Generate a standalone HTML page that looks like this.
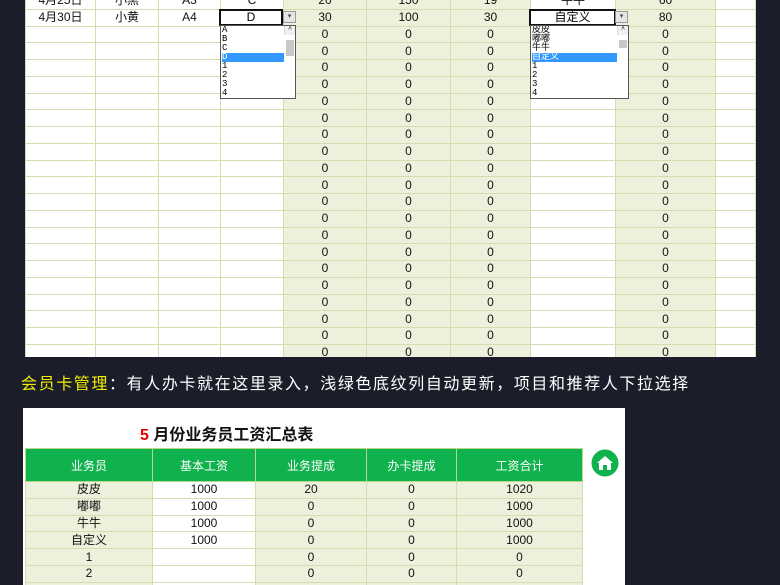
<!DOCTYPE html>
<html><head><meta charset="utf-8"><style>
*{margin:0;padding:0;box-sizing:border-box}
html{width:780px;height:585px;overflow:hidden}
body{width:780px;height:585px;overflow:hidden;background:#1b1d2a;font-family:"Liberation Sans","Noto Sans CJK SC",sans-serif;position:relative}
table{border-collapse:collapse;table-layout:fixed;position:absolute}
td{border:1px solid #d3ddb0;text-align:center;font-size:12px;color:#111;padding:0;overflow:hidden;white-space:nowrap}
.g{background:#edf1dc}
.w{background:#fff}
#top td{height:16.75px;line-height:15px}
.box{position:absolute;background:#fff;border:1px solid #555;font-size:9px;line-height:9px;padding-left:1px;color:#000;overflow:hidden}
.box div{height:9px;font-family:"Liberation Mono","Noto Sans CJK SC",monospace}
.sel{background:#3399ff;color:#fff}
.sb{position:absolute;top:0;right:0;width:11px;height:100%;background:#f0f0f0;border-left:1px solid #ddd}
.arr{position:absolute;width:13px;height:12px;background:#e6e6e6;border:1px solid #999;font-size:7px;line-height:10px;text-align:center;color:#444}
.act{position:absolute;border:2px solid #111;background:#fff;font-size:12px;text-align:center;line-height:13px}
#bot td{height:16.8px;line-height:15px}
#bot th{background:#10b24e;color:#fff;font-weight:normal;font-size:12px;height:33px;border:1px solid #b8d88a}
</style></head><body>
<table id="top" style="left:25px;top:-8px;width:730px">
<colgroup><col style="width:70px"><col style="width:63px"><col style="width:62px"><col style="width:63px"><col style="width:83px"><col style="width:84px"><col style="width:80px"><col style="width:85px"><col style="width:100px"><col style="width:40px"></colgroup>
<tr><td class="w">4月25日</td><td class="w">小黑</td><td class="w">A3</td><td class="w">C</td><td class="g">20</td><td class="g">150</td><td class="g">19</td><td class="w">牛牛</td><td class="g">60</td><td class="w"></td></tr>
<tr><td class="w">4月30日</td><td class="w">小黄</td><td class="w">A4</td><td class="w">D</td><td class="g">30</td><td class="g">100</td><td class="g">30</td><td class="w">自定义</td><td class="g">80</td><td class="w"></td></tr>
<tr><td class="w"></td><td class="w"></td><td class="w"></td><td class="w"></td><td class="g">0</td><td class="g">0</td><td class="g">0</td><td class="w"></td><td class="g">0</td><td class="w"></td></tr>
<tr><td class="w"></td><td class="w"></td><td class="w"></td><td class="w"></td><td class="g">0</td><td class="g">0</td><td class="g">0</td><td class="w"></td><td class="g">0</td><td class="w"></td></tr>
<tr><td class="w"></td><td class="w"></td><td class="w"></td><td class="w"></td><td class="g">0</td><td class="g">0</td><td class="g">0</td><td class="w"></td><td class="g">0</td><td class="w"></td></tr>
<tr><td class="w"></td><td class="w"></td><td class="w"></td><td class="w"></td><td class="g">0</td><td class="g">0</td><td class="g">0</td><td class="w"></td><td class="g">0</td><td class="w"></td></tr>
<tr><td class="w"></td><td class="w"></td><td class="w"></td><td class="w"></td><td class="g">0</td><td class="g">0</td><td class="g">0</td><td class="w"></td><td class="g">0</td><td class="w"></td></tr>
<tr><td class="w"></td><td class="w"></td><td class="w"></td><td class="w"></td><td class="g">0</td><td class="g">0</td><td class="g">0</td><td class="w"></td><td class="g">0</td><td class="w"></td></tr>
<tr><td class="w"></td><td class="w"></td><td class="w"></td><td class="w"></td><td class="g">0</td><td class="g">0</td><td class="g">0</td><td class="w"></td><td class="g">0</td><td class="w"></td></tr>
<tr><td class="w"></td><td class="w"></td><td class="w"></td><td class="w"></td><td class="g">0</td><td class="g">0</td><td class="g">0</td><td class="w"></td><td class="g">0</td><td class="w"></td></tr>
<tr><td class="w"></td><td class="w"></td><td class="w"></td><td class="w"></td><td class="g">0</td><td class="g">0</td><td class="g">0</td><td class="w"></td><td class="g">0</td><td class="w"></td></tr>
<tr><td class="w"></td><td class="w"></td><td class="w"></td><td class="w"></td><td class="g">0</td><td class="g">0</td><td class="g">0</td><td class="w"></td><td class="g">0</td><td class="w"></td></tr>
<tr><td class="w"></td><td class="w"></td><td class="w"></td><td class="w"></td><td class="g">0</td><td class="g">0</td><td class="g">0</td><td class="w"></td><td class="g">0</td><td class="w"></td></tr>
<tr><td class="w"></td><td class="w"></td><td class="w"></td><td class="w"></td><td class="g">0</td><td class="g">0</td><td class="g">0</td><td class="w"></td><td class="g">0</td><td class="w"></td></tr>
<tr><td class="w"></td><td class="w"></td><td class="w"></td><td class="w"></td><td class="g">0</td><td class="g">0</td><td class="g">0</td><td class="w"></td><td class="g">0</td><td class="w"></td></tr>
<tr><td class="w"></td><td class="w"></td><td class="w"></td><td class="w"></td><td class="g">0</td><td class="g">0</td><td class="g">0</td><td class="w"></td><td class="g">0</td><td class="w"></td></tr>
<tr><td class="w"></td><td class="w"></td><td class="w"></td><td class="w"></td><td class="g">0</td><td class="g">0</td><td class="g">0</td><td class="w"></td><td class="g">0</td><td class="w"></td></tr>
<tr><td class="w"></td><td class="w"></td><td class="w"></td><td class="w"></td><td class="g">0</td><td class="g">0</td><td class="g">0</td><td class="w"></td><td class="g">0</td><td class="w"></td></tr>
<tr><td class="w"></td><td class="w"></td><td class="w"></td><td class="w"></td><td class="g">0</td><td class="g">0</td><td class="g">0</td><td class="w"></td><td class="g">0</td><td class="w"></td></tr>
<tr><td class="w"></td><td class="w"></td><td class="w"></td><td class="w"></td><td class="g">0</td><td class="g">0</td><td class="g">0</td><td class="w"></td><td class="g">0</td><td class="w"></td></tr>
<tr><td class="w"></td><td class="w"></td><td class="w"></td><td class="w"></td><td class="g">0</td><td class="g">0</td><td class="g">0</td><td class="w"></td><td class="g">0</td><td class="w"></td></tr>
<tr><td class="w"></td><td class="w"></td><td class="w"></td><td class="w"></td><td class="g">0</td><td class="g">0</td><td class="g">0</td><td class="w"></td><td class="g">0</td><td class="w"></td></tr>
</table>
<div style="position:absolute;left:0;top:357px;width:780px;height:20px;background:#1b1d2a"></div>

<div class="act" style="left:219px;top:9px;width:64px;height:17px">D</div>
<div class="arr" style="left:283px;top:11px">▾</div>
<div class="box" style="left:220px;top:25px;width:76px;height:74px">
<div>A</div><div>B</div><div>C</div><div class="sel" style="margin-right:11px">D</div><div>1</div><div>2</div><div>3</div><div>4</div>
<div class="sb"><div style="font-size:7px;text-align:center">^</div><div style="margin:5px 1px;height:16px;background:#c8c8c8"></div></div>
</div>
<div class="act" style="left:529px;top:9px;width:87px;height:17px">自定义</div>
<div class="arr" style="left:615px;top:11px">▾</div>
<div class="box" style="left:530px;top:25px;width:99px;height:74px">
<div>皮皮</div><div>嘟嘟</div><div>牛牛</div><div class="sel" style="margin-right:11px">自定义</div><div>1</div><div>2</div><div>3</div><div>4</div>
<div class="sb"><div style="font-size:7px;text-align:center">^</div><div style="margin:5px 1px;height:8px;background:#c8c8c8"></div></div>
</div>

<div style="position:absolute;left:21px;top:370px;font-size:16px;color:#fff;white-space:nowrap;letter-spacing:1.6px"><span style="color:#f0f000">会员卡管理</span>：有人办卡就在这里录入，浅绿色底纹列自动更新，项目和推荐人下拉选择</div>

<div style="position:absolute;left:23px;top:408px;width:602px;height:177px;background:#fff"></div>
<div style="position:absolute;left:140px;top:421px;font-size:16px;font-weight:bold;color:#111"><span style="color:#e00000">5</span> 月份业务员工资汇总表</div>
<table id="bot" style="left:25px;top:448px;width:557px">
<colgroup><col style="width:127px"><col style="width:103px"><col style="width:111px"><col style="width:90px"><col style="width:126px"></colgroup>
<tr><th>业务员</th><th>基本工资</th><th>业务提成</th><th>办卡提成</th><th>工资合计</th></tr>
<tr><td class="g">皮皮</td><td class="w">1000</td><td class="g">20</td><td class="g">0</td><td class="g">1020</td></tr>
<tr><td class="g">嘟嘟</td><td class="w">1000</td><td class="g">0</td><td class="g">0</td><td class="g">1000</td></tr>
<tr><td class="g">牛牛</td><td class="w">1000</td><td class="g">0</td><td class="g">0</td><td class="g">1000</td></tr>
<tr><td class="g">自定义</td><td class="w">1000</td><td class="g">0</td><td class="g">0</td><td class="g">1000</td></tr>
<tr><td class="g">1</td><td class="w"></td><td class="g">0</td><td class="g">0</td><td class="g">0</td></tr>
<tr><td class="g">2</td><td class="w"></td><td class="g">0</td><td class="g">0</td><td class="g">0</td></tr>
<tr><td class="g">3</td><td class="w"></td><td class="g">0</td><td class="g">0</td><td class="g">0</td></tr>
</table>
<svg style="position:absolute;left:591px;top:449px" width="28" height="28" viewBox="0 0 28 28">
<circle cx="14" cy="14" r="13.5" fill="#10b24e"/>
<path d="M6 14 L14 7 L22 14 L20 14 L20 21 L16 21 L16 16 L12 16 L12 21 L8 21 L8 14 Z" fill="#fff"/>
</svg>
</body></html>
